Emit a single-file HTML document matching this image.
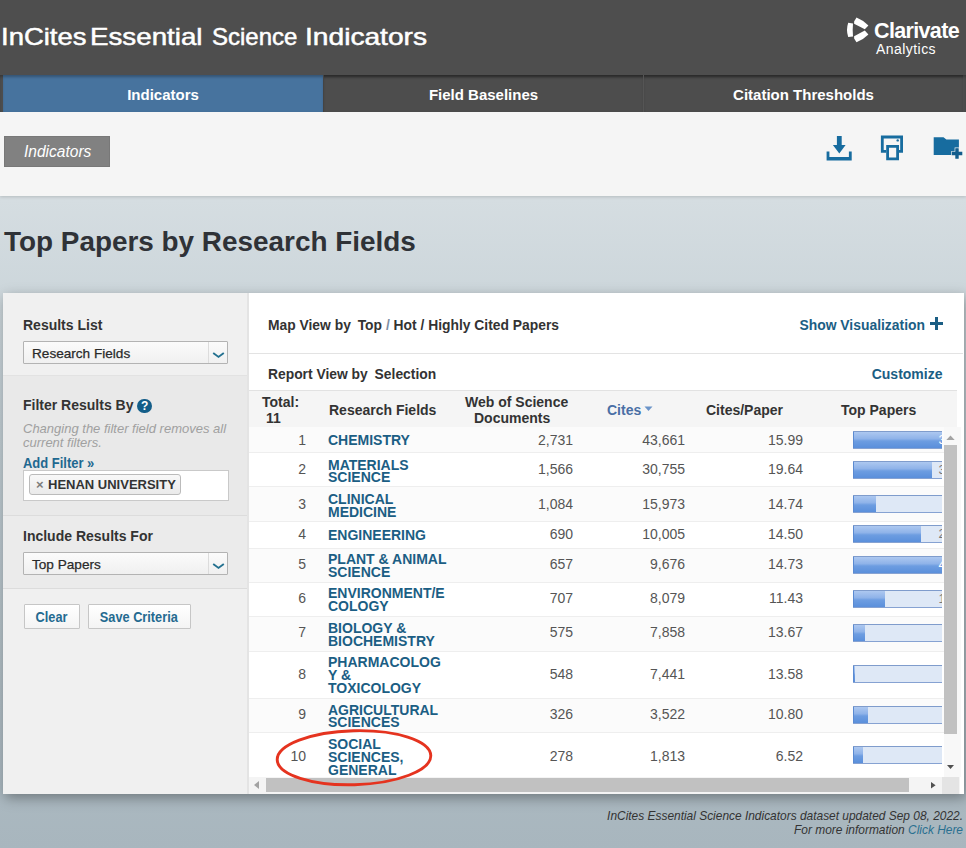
<!DOCTYPE html>
<html>
<head>
<meta charset="utf-8">
<title>InCites Essential Science Indicators</title>
<style>
*{box-sizing:border-box;margin:0;padding:0}
html,body{width:966px;height:848px;overflow:hidden}
body{font-family:"Liberation Sans",sans-serif;color:#333;position:relative;
 background:linear-gradient(to bottom,#d5dde1 0px,#d5dde1 200px,#c1cdd3 420px,#afbcc3 700px,#a8b6be 848px);}
.abs{position:absolute}
#hdr{left:0;top:0;width:966px;height:75px;background:#4e4e4e}
#hdr .ttl{position:absolute;top:23px;font-size:24px;line-height:28px;color:#fff;white-space:nowrap;transform-origin:0 0;-webkit-text-stroke:0.5px #fff}
#tabs{left:0;top:75px;width:966px;height:37px;background:#4d4d4d;box-shadow:inset 0 3px 3px -1px rgba(0,0,0,.28)}
#tabs .t{position:absolute;top:0;height:38px;box-shadow:inset 0 3px 3px -1px rgba(0,0,0,.28);line-height:39px;text-align:center;color:#fff;font-weight:bold;font-size:15px}
#tabs .t1{left:3px;width:320px;background:#47739e}
#tabs .t2{left:323px;width:320px;border-left:1px solid #444}
#tabs .t3{left:643px;width:320px;border-left:1px solid #555}
#tool{left:0;top:112px;width:966px;height:84px;background:#f5f5f5;box-shadow:0 1px 3px rgba(0,0,0,.15)}
#crumb{left:4px;top:136px;width:106px;height:31px;background:#818181;color:#fff;font-style:italic;font-size:16px;line-height:29px;text-align:center;border:1px solid #787878}
#crumb span{display:inline-block;transform:scaleX(0.97);position:relative;left:1px}
h1{position:absolute;left:4px;top:225px;font-size:27.9px;line-height:34px;font-weight:bold;color:#2f3237;white-space:nowrap}
#left{left:3px;top:293px;width:244px;height:501px;background:#f0f0f0}
#right{left:249px;top:293px;width:715px;height:501px;background:#fff}
.lbl{position:absolute;left:20px;font-weight:bold;font-size:14px;line-height:16px;color:#333;white-space:nowrap}
.sel{position:absolute;left:20px;width:205px;height:23px;border:1px solid #b3b3b3;background:linear-gradient(#fbfbfb,#f0f0f0);font-size:13.6px;line-height:24px;padding-left:8px;color:#2a2a2a;border-radius:1px;-webkit-text-stroke:0.25px #2a2a2a;overflow:hidden}
.sel .arr{position:absolute;right:0;top:0;width:19px;height:21px;border-left:1px solid #dcdcdc}
.btn{position:absolute;height:25px;border:1px solid #c6c6c6;background:linear-gradient(#fff,#f4f4f4);color:#246a90;font-weight:bold;font-size:14px;line-height:24px;text-align:center;border-radius:1px;white-space:nowrap}
.btn span{display:inline-block;transform:scaleX(0.91);transform-origin:50% 50%}
.lnk{color:#1b5e84}

.row{position:absolute;left:0;width:695px;border-bottom:1px solid #eeeeee;overflow:hidden}
.c{position:absolute;font-size:14px;line-height:16px;white-space:nowrap;color:#555}
.num{left:20px;width:37px;text-align:right}
.fld{left:79px;font-weight:bold;font-size:14px;line-height:12.9px;color:#1b5e84}
.v1{left:224px;width:100px;text-align:right}
.v2{left:336px;width:100px;text-align:right}
.v3{left:454px;width:100px;text-align:right}
.bar{position:absolute;left:603.5px;width:89px;height:18px;background:#dee8f6;border-top:1px solid #7f9ccc;border-bottom:1px solid #86a2d2;overflow:hidden}
.fill{position:absolute;left:0;top:0;height:16px;background:linear-gradient(to bottom,#adc8f0 0%,#8fb3e9 42%,#6d9de1 56%,#5a8fdb 100%);border-left:1px solid #5a8ad2}
.bl{position:absolute;left:86px;top:0;font-size:13px;line-height:16px}
.bl.w{color:#fff}.bl.d{color:#777}
.th{position:absolute;font-weight:bold;font-size:14px;line-height:16px;color:#333;white-space:nowrap}
</style>
</head>
<body>
<div id="hdr" class="abs"><div class="ttl" style="left:1px;transform:scaleX(1.144)">InCites</div><div class="ttl" style="left:90px;transform:scaleX(1.155)">Essential</div><div class="ttl" style="left:212px;transform:scaleX(1.0)">Science</div><div class="ttl" style="left:305px;transform:scaleX(1.173)">Indicators</div>
 <svg class="abs" style="left:842px;top:12px" width="40" height="36" viewBox="0 0 40 36"><g fill="#fff"><path d="M6.2 10.8L11 11.5Q10.4 18 11 24.4L6.2 25Q3.8 18 6.2 10.8Z"/><path d="M14.5 5.6L12.1 9.4L12.1 11.7L22.8 17.3L26.4 13.5Q21 8.2 14.5 5.6Z"/><path d="M14.5 30.3L12.1 26.5L12.1 24.2L22.8 18.6L26.4 22.4Q21 27.7 14.5 30.3Z"/></g></svg>
 <div class="abs" style="left:874px;top:19px;font-weight:bold;font-size:21.5px;line-height:24px;color:#fff;letter-spacing:-0.65px;white-space:nowrap">Clarivate</div>
 <div class="abs" style="left:876px;top:41px;font-size:14px;line-height:16px;color:#fff;letter-spacing:0.45px;white-space:nowrap">Analytics</div>
</div>
<div id="tabs" class="abs">
 <div class="t t1">Indicators</div>
 <div class="t t2">Field Baselines</div>
 <div class="t t3">Citation Thresholds</div>
</div>
<div id="tool" class="abs"></div>
<div id="crumb" class="abs"><span>Indicators</span></div>
<svg class="abs" style="left:820px;top:130px" width="146" height="36" viewBox="0 0 146 36">
 <g fill="#176c9f">
  <path d="M16.9 6.1h4.8v8.9h3.9L19.3 23.6L12.9 15h4z"/>
  <path d="M6.6 21.6h2.8v5.4h19.5v-5.4h2.8v9H6.6z"/>
  <path d="M60.9 5.6h22.1v17.1h-4.5v-2.8h1.7v-11.5h-16.5v11.5h2.5v2.8h-5.3z"/>
  <path d="M66.2 15h12.8v15.2h-12.8zM69 17.8v9.6h7.2v-9.6z" fill-rule="evenodd"/>
  <circle cx="77.7" cy="10.4" r="1.2"/>
  <path d="M113.7 7.2h9.8l2.9 2.3h12.5v15.5h-25.2z"/>
 </g>
 <path d="M135.3 18.2h3.4v3.6h3.6v3.4h-3.6v3.6h-3.4v-3.6h-3.6v-3.4h3.6z" fill="#125d8c" stroke="#f5f5f5" stroke-width="1.3" paint-order="stroke"/>
</svg>
<h1>Top Papers by Research Fields</h1>

<div class="abs" style="left:3px;top:293px;width:961px;height:501px;background:#e4e4e4;box-shadow:2px 4px 12px rgba(0,0,0,.34)"></div>
<div id="left" class="abs">
 <div class="abs" style="left:0;top:82px;width:244px;height:141px;background:#e9e9e9;border-top:1px solid #e2e2e2;border-bottom:1px solid #dcdcdc"></div>
 <div class="abs" style="left:0;top:223px;width:244px;height:73px;background:#ebebeb;border-bottom:1px solid #dcdcdc"></div>
 <div class="lbl" style="top:24px">Results List</div>
 <div class="sel" style="top:48px">Research Fields<div class="arr"><svg style="position:absolute;left:3px;top:9px" width="13" height="8" viewBox="0 0 13 8"><path d="M1.2 2L6.5 5.9L11.8 2" stroke="#22708f" stroke-width="1.9" fill="none"/></svg></div></div>
 <div class="lbl" style="top:104px">Filter Results By</div>
 <div class="abs" style="left:134.4px;top:105.6px;width:14.6px;height:14.6px;border-radius:8px;background:#145e89;color:#fff;font-weight:bold;font-size:12px;line-height:14.6px;text-align:center">?</div>
 <div class="abs" style="left:20px;top:129px;width:215px;font-style:italic;font-size:13px;line-height:14px;color:#a0a0a0">Changing the filter field removes all current filters.</div>
 <div class="abs lnk" style="left:20px;top:161.5px;font-weight:bold;font-size:14px;line-height:16px;white-space:nowrap;transform:scaleX(0.925);transform-origin:0 50%;color:#1f6890">Add Filter »</div>
 <div class="abs" style="left:20px;top:177px;width:206px;height:31px;background:#fff;border:1px solid #c9c9c9"></div>
 <div class="abs" style="left:26px;top:181px;width:152px;height:21px;border:1px solid #bbb;border-radius:3px;background:linear-gradient(#f8f8f8,#eaeaea);font-weight:bold;font-size:13px;line-height:19px;color:#333;white-space:nowrap;padding-left:18px"><span style="position:absolute;left:6px;top:0;color:#7c7c7c;font-size:13px;font-weight:bold">×</span>HENAN UNIVERSITY</div>
 <div class="lbl" style="top:235px">Include Results For</div>
 <div class="sel" style="top:259px">Top Papers<div class="arr"><svg style="position:absolute;left:3px;top:9px" width="13" height="8" viewBox="0 0 13 8"><path d="M1.2 2L6.5 5.9L11.8 2" stroke="#22708f" stroke-width="1.9" fill="none"/></svg></div></div>
 <div class="btn" style="left:20.5px;top:311px;width:56px"><span>Clear</span></div>
 <div class="btn" style="left:84.5px;top:311px;width:103px"><span>Save Criteria</span></div>
</div>

<div id="right" class="abs">
 <div class="th" style="left:19px;top:24px;font-size:13.85px">Map View by<span style="margin-left:3px"></span> Top <span style="color:#7d8da3">/</span> Hot / Highly Cited Papers</div>
 <div class="th" style="right:39px;top:24px;color:#1b5e84;font-size:13.9px">Show Visualization</div>
 <svg class="abs" style="left:679.6px;top:23px" width="15" height="15" viewBox="0 0 15 15"><path d="M7.5 1v13M1 7.5h13" stroke="#1b5e84" stroke-width="3" fill="none"/></svg>
 <div class="abs" style="left:0;top:60px;width:714px;height:1px;background:#e3e3e3"></div>
 <div class="th" style="left:19px;top:73px;font-size:13.85px">Report View by<span style="margin-left:3px"></span> Selection</div>
 <div class="th" style="right:21.5px;top:73px;color:#1b5e84;font-size:14px">Customize</div>
 <div class="abs" style="left:0;top:97px;width:708px;height:37px;background:#f5f5f5;border-top:1px solid #e2e2e2"></div>
 <div class="th" style="left:13px;top:101px">Total:<br>&nbsp;11</div>
 <div class="th" style="left:80px;top:109px">Research Fields</div>
 <div class="th" style="left:216px;top:101px">Web of Science</div>
 <div class="th" style="left:225px;top:117px">Documents</div>
 <div class="th" style="left:358px;top:109px;color:#4a6fa5">Cites</div>
 <svg class="abs" style="left:395px;top:113px" width="9" height="6" viewBox="0 0 9 6"><path d="M0.5 0.5h8L4.5 5z" fill="#6a93c8"/></svg>
 <div class="th" style="left:457px;top:109px">Cites/Paper</div>
 <div class="th" style="left:592px;top:109px">Top Papers</div>
<div class="row" style="top:134px;height:26px;background:#fbfbfb">
 <div class="c num" style="top:4.6px">1</div>
 <div class="c fld" style="top:7.0px">CHEMISTRY</div>
 <div class="c v1" style="top:4.6px">2,731</div>
 <div class="c v2" style="top:4.6px">43,661</div>
 <div class="c v3" style="top:4.6px">15.99</div>
 <div class="bar" style="top:4.0px"><div class="fill" style="width:100px"></div><span class="bl w">3</span></div>
</div>
<div class="row" style="top:160px;height:34px;background:#fff">
 <div class="c num" style="top:8.3px">2</div>
 <div class="c fld" style="top:5.5px">MATERIALS<br>SCIENCE</div>
 <div class="c v1" style="top:8.3px">1,566</div>
 <div class="c v2" style="top:8.3px">30,755</div>
 <div class="c v3" style="top:8.3px">19.64</div>
 <div class="bar" style="top:8.0px"><div class="fill" style="width:79px"></div><span class="bl d">3</span></div>
</div>
<div class="row" style="top:194px;height:35px;background:#fbfbfb">
 <div class="c num" style="top:9.3px">3</div>
 <div class="c fld" style="top:5.9px">CLINICAL<br>MEDICINE</div>
 <div class="c v1" style="top:9.3px">1,084</div>
 <div class="c v2" style="top:9.3px">15,973</div>
 <div class="c v3" style="top:9.3px">14.74</div>
 <div class="bar" style="top:8.3px"><div class="fill" style="width:23px"></div></div>
</div>
<div class="row" style="top:229px;height:27px;background:#fff">
 <div class="c num" style="top:3.7px">4</div>
 <div class="c fld" style="top:6.8px">ENGINEERING</div>
 <div class="c v1" style="top:3.7px">690</div>
 <div class="c v2" style="top:3.7px">10,005</div>
 <div class="c v3" style="top:3.7px">14.50</div>
 <div class="bar" style="top:3.4px"><div class="fill" style="width:68px"></div><span class="bl d">2</span></div>
</div>
<div class="row" style="top:256px;height:34px;background:#fbfbfb">
 <div class="c num" style="top:6.8px">5</div>
 <div class="c fld" style="top:3.9px">PLANT &amp; ANIMAL<br>SCIENCE</div>
 <div class="c v1" style="top:6.8px">657</div>
 <div class="c v2" style="top:6.8px">9,676</div>
 <div class="c v3" style="top:6.8px">14.73</div>
 <div class="bar" style="top:6.5px"><div class="fill" style="width:100px"></div><span class="bl w">4</span></div>
</div>
<div class="row" style="top:290px;height:34px;background:#fff">
 <div class="c num" style="top:7.0px">6</div>
 <div class="c fld" style="top:4.0px">ENVIRONMENT/E<br>COLOGY</div>
 <div class="c v1" style="top:7.0px">707</div>
 <div class="c v2" style="top:7.0px">8,079</div>
 <div class="c v3" style="top:7.0px">11.43</div>
 <div class="bar" style="top:6.9px"><div class="fill" style="width:32px"></div><span class="bl d">1</span></div>
</div>
<div class="row" style="top:324px;height:35px;background:#fbfbfb">
 <div class="c num" style="top:7.2px">7</div>
 <div class="c fld" style="top:4.8px">BIOLOGY &amp;<br>BIOCHEMISTRY</div>
 <div class="c v1" style="top:7.2px">575</div>
 <div class="c v2" style="top:7.2px">7,858</div>
 <div class="c v3" style="top:7.2px">13.67</div>
 <div class="bar" style="top:7.1px"><div class="fill" style="width:12.5px"></div></div>
</div>
<div class="row" style="top:359px;height:47px;background:#fff">
 <div class="c num" style="top:13.9px">8</div>
 <div class="c fld" style="top:4.1px">PHARMACOLOG<br>Y &amp;<br>TOXICOLOGY</div>
 <div class="c v1" style="top:13.9px">548</div>
 <div class="c v2" style="top:13.9px">7,441</div>
 <div class="c v3" style="top:13.9px">13.58</div>
 <div class="bar" style="top:13.0px"><div class="fill" style="width:2.5px"></div></div>
</div>
<div class="row" style="top:406px;height:34px;background:#fbfbfb">
 <div class="c num" style="top:7.4px">9</div>
 <div class="c fld" style="top:4.5px">AGRICULTURAL<br>SCIENCES</div>
 <div class="c v1" style="top:7.4px">326</div>
 <div class="c v2" style="top:7.4px">3,522</div>
 <div class="c v3" style="top:7.4px">10.80</div>
 <div class="bar" style="top:7.0px"><div class="fill" style="width:15px"></div></div>
</div>
<div class="row" style="top:440px;height:46px;background:#fff">
 <div class="c num" style="top:14.7px">10</div>
 <div class="c fld" style="top:4.9px">SOCIAL<br>SCIENCES,<br>GENERAL</div>
 <div class="c v1" style="top:14.7px">278</div>
 <div class="c v2" style="top:14.7px">1,813</div>
 <div class="c v3" style="top:14.7px">6.52</div>
 <div class="bar" style="top:13.3px"><div class="fill" style="width:10px"></div></div>
</div>
 <!-- vertical scrollbar -->
 <div class="abs" style="left:694.5px;top:134px;width:17px;height:350px;background:#f8f8f8"></div>
 <div class="abs" style="left:695px;top:152px;width:12.5px;height:289px;background:#c1c1c1"></div>
 <svg class="abs" style="left:697px;top:141.5px" width="9" height="5" viewBox="0 0 9 5"><path d="M0.3 5L4.5 0.6L8.7 5z" fill="#a3a3a3"/></svg>
 <svg class="abs" style="left:697.8px;top:472.3px" width="7" height="4" viewBox="0 0 8 4.5"><path d="M0 0L4 4.5L8 0z" fill="#505050"/></svg>
 <!-- horizontal scrollbar -->
 <div class="abs" style="left:0;top:484px;width:711px;height:17px;background:#f4f4f4"></div>
 <div class="abs" style="left:16.5px;top:485px;width:643px;height:13.5px;background:#c1c1c1"></div>
 <svg class="abs" style="left:5px;top:488px" width="5" height="8" viewBox="0 0 5 8"><path d="M5 0L0 4L5 8z" fill="#a3a3a3"/></svg>
 <svg class="abs" style="left:682px;top:489px" width="4.6" height="6.6" viewBox="0 0 5 7"><path d="M0 0L5 3.5L0 7z" fill="#505050"/></svg>
 <div class="abs" style="left:692.5px;top:484px;width:17px;height:17px;background:#e4e4e4"></div>
 <!-- red ellipse -->
 <svg class="abs" style="left:20px;top:430px" width="170" height="70" viewBox="0 0 170 70"><ellipse cx="85" cy="34.7" rx="76.8" ry="27" fill="none" stroke="#e5331f" stroke-width="2.9" transform="rotate(-1.6 85 34.7)"/></svg>
</div>


<div class="abs" style="right:3px;top:808.5px;text-align:right;font-style:italic;font-size:11.93px;line-height:14.4px;color:#333;white-space:nowrap">InCites Essential Science Indicators dataset updated Sep 08, 2022.<br>For more information <span style="color:#2a7090">Click Here</span></div>
</body>
</html>
